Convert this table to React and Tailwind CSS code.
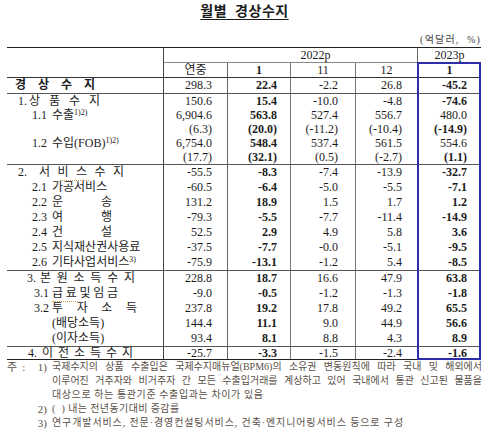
import React from 'react';

const COLS = 'grid grid-cols-[156px_64px_63px_65px_62px_64px]';
const PADS = ['pr-[15px]', 'pr-[13px]', 'pr-[17px]', 'pr-[15px]', 'pr-[14px]'];
const LINES = ['border-[#444]', 'border-[#666]', 'border-[#777]', 'border-[#777]', 'border-[#777]'];

// spaced-out label like "경 상 수 지"
function Spread({ text, w }) {
    return (
        <span className={`flex justify-between ${w}`}>
            {text.split('').map((c, i) => <span key={i}>{c}</span>)}
        </span>
    );
}

const groups = [
    {
        h: 'h-[15px] leading-[15px]',
        rows: [
            { label: <span className="pl-[8px] font-bold"><Spread text="경상수지" w="w-[80px]" /></span>, v: ['298.3', '22.4', '-2.2', '26.8', '-45.2'] },
        ],
    },
    {
        h: 'h-[14px] leading-[14px]',
        rows: [
            { num: '1.', pl: 'pl-[11px]', nw: 'w-[11px]', label: <Spread text="상품수지" w="w-[71px]" />, v: ['150.6', '15.4', '-10.0', '-4.8', '-74.6'] },
            { num: '1.1', pl: 'pl-[25px]', nw: 'w-[20px]', label: <span>수출<sup className="text-[8px]">1)2)</sup></span>, v: ['6,904.6', '563.8', '527.4', '556.7', '480.0'], light: true },
            { v: ['(6.3)', '(20.0)', '(-11.2)', '(-10.4)', '(-14.9)'] },
            { num: '1.2', pl: 'pl-[25px]', nw: 'w-[20px]', label: <span>수입(FOB)<sup className="text-[8px]">1)2)</sup></span>, v: ['6,754.0', '548.4', '537.4', '561.5', '554.6'], light: true },
            { v: ['(17.7)', '(32.1)', '(0.5)', '(-2.7)', '(1.1)'] },
        ],
    },
    {
        h: 'h-[15px] leading-[15px]',
        rows: [
            {
                num: '2.', pl: 'pl-[11px]', nw: 'w-[21px]',
                label: (
                    <span className="relative">
                        <Spread text="서비스수지" w="w-[85px]" />
                        <span className="absolute left-[21px] bottom-[-1px] w-[29px] border-b border-dotted border-[#d4a24a]" />
                    </span>
                ),
                v: ['-55.5', '-8.3', '-7.4', '-13.9', '-32.7'],
            },
            { num: '2.1', pl: 'pl-[25px]', nw: 'w-[20px]', label: '가공서비스', v: ['-60.5', '-6.4', '-5.0', '-5.5', '-7.1'] },
            { num: '2.2', pl: 'pl-[25px]', nw: 'w-[20px]', label: <Spread text="운송" w="w-[60px]" />, v: ['131.2', '18.9', '1.5', '1.7', '1.2'] },
            { num: '2.3', pl: 'pl-[25px]', nw: 'w-[20px]', label: <Spread text="여행" w="w-[60px]" />, v: ['-79.3', '-5.5', '-7.7', '-11.4', '-14.9'] },
            { num: '2.4', pl: 'pl-[25px]', nw: 'w-[20px]', label: <Spread text="건설" w="w-[60px]" />, v: ['52.5', '2.9', '4.9', '5.8', '3.6'] },
            { num: '2.5', pl: 'pl-[25px]', nw: 'w-[20px]', label: '지식재산권사용료', v: ['-37.5', '-7.7', '-0.0', '-5.1', '-9.5'] },
            { num: '2.6', pl: 'pl-[25px]', nw: 'w-[20px]', label: <span>기타사업서비스<sup className="text-[8px]">3)</sup></span>, v: ['-75.9', '-13.1', '-1.2', '5.4', '-8.5'] },
        ],
    },
    {
        h: 'h-[15px] leading-[15px]',
        rows: [
            { num: '3.', pl: 'pl-[20px]', nw: 'w-[13px]', label: <Spread text="본원소득수지" w="w-[95px]" />, v: ['228.8', '18.7', '16.6', '47.9', '63.8'] },
            {
                num: '3.1', pl: 'pl-[27px]', nw: 'w-[18px]',
                label: (
                    <span className="relative">
                        <Spread text="급료및임금" w="w-[66px]" />
                        <span className="absolute left-0 bottom-[-1px] w-[26px] border-b border-dotted border-[#d4a24a]" />
                    </span>
                ),
                v: ['-9.0', '-0.5', '-1.2', '-1.3', '-1.8'],
            },
            { num: '3.2', pl: 'pl-[27px]', nw: 'w-[18px]', label: <Spread text="투자소득" w="w-[85px]" />, v: ['237.8', '19.2', '17.8', '49.2', '65.5'] },
            { pl: 'pl-[45px]', label: '(배당소득)', v: ['144.4', '11.1', '9.0', '44.9', '56.6'] },
            { pl: 'pl-[45px]', label: '(이자소득)', v: ['93.4', '8.1', '8.8', '4.3', '8.9'] },
        ],
    },
    {
        h: 'h-[12px] leading-[12px]',
        rows: [
            { num: '4.', pl: 'pl-[21px]', nw: 'w-[14px]', label: <Spread text="이전소득수지" w="w-[91px]" />, v: ['-25.7', '-3.3', '-1.5', '-2.4', '-1.6'] },
        ],
    },
];

function Row({ row, h }) {
    return (
        <div className={`${COLS} ${h}`}>
            <div className={`flex items-center ${row.pl || ''}`}>
                {row.num && <span className={`${row.nw} shrink-0`}>{row.num}</span>}
                {row.label}
            </div>
            {row.v.map((val, i) => {
                const bold = i === 1 || (i === 4 && !row.light);
                return (
                    <div key={i} className={`border-l ${LINES[i]} text-right ${PADS[i]} ${bold ? 'font-bold' : ''}`}>
                        {val}
                    </div>
                );
            })}
        </div>
    );
}

export default function App() {
    return (
        <div className="w-[500px] h-[439px] overflow-hidden bg-white text-[#1c1c1c] font-['Liberation_Serif','Noto_Sans_CJK_KR',serif] text-[12px]">
            <div className="flex justify-center pr-[11px] pt-[3px]">
                <h1 className="text-[14px] font-bold leading-[18px] underline underline-offset-[3px] decoration-1 tracking-[0.5px]">월별&nbsp;&nbsp;경상수지</h1>
            </div>

            <div className="ml-[7px] w-[474px]">
                <div className="mt-[12px] text-right text-[10px] leading-[14px] tracking-[1.2px] text-[#444]">(억달러,&nbsp; %)</div>

                <div className="relative border-t border-[#222]">
                    {/* header */}
                    <div className={`${COLS} grid-rows-[15px_14px] border-b border-[#333] leading-[14px]`}>
                        <div className="row-span-2" />
                        <div className="col-span-4 border-l border-b border-[#444] border-b-[#888] text-center pl-[50px]">2022p</div>
                        <div className="border-l border-b border-[#666] border-b-[#888] text-center">2023p</div>
                        <div className="border-l border-[#444] text-center">연중</div>
                        <div className="border-l border-[#666] text-center font-bold">1</div>
                        <div className="border-l border-[#777] text-center">11</div>
                        <div className="border-l border-[#777] text-center">12</div>
                        <div className="border-l border-[#777] text-center font-bold">1</div>
                    </div>

                    {groups.map((g, gi) => (
                        <div key={gi} className={`border-b ${gi === groups.length - 1 ? 'border-[#222]' : 'border-[#555]'}`}>
                            {g.rows.map((row, ri) => <Row key={ri} row={row} h={g.h} />)}
                        </div>
                    ))}

                    {/* highlight frame on the latest month */}
                    <div className="pointer-events-none absolute right-0 top-[14px] bottom-0 w-[64px] border-2 border-[#2e2eaa]" />
                </div>
            </div>

            <div className="ml-[7px] w-[475px] text-[10px] leading-[14px] text-[#5a5048]">
                <div className="flex">
                    <div className="w-[45px] shrink-0 flex text-[11px]">
                        <span>주</span>
                        <span className="ml-[5px]">:</span>
                        <span className="ml-auto pr-[5px]">1)</span>
                    </div>
                    <div className="flex-1 text-justify [text-align-last:justify]">국제수지의 상품 수출입은 국제수지매뉴얼(BPM6)의 소유권 변동원칙에 따라 국내 및 해외에서</div>
                </div>
                <div className="pl-[45px] text-justify [text-align-last:justify]">이루어진 거주자와 비거주자 간 모든 수출입거래를 계상하고 있어 국내에서 통관 신고된 물품을</div>
                <div className="pl-[45px] tracking-[0.6px]">대상으로 하는 통관기준 수출입과는 차이가 있음</div>
                <div className="flex">
                    <div className="w-[45px] shrink-0 text-right pr-[5px] text-[11px]">2)</div>
                    <div className="tracking-[0.4px]">(&nbsp;&nbsp;) 내는 전년동기대비 증감률</div>
                </div>
                <div className="flex">
                    <div className="w-[45px] shrink-0 text-right pr-[5px] text-[11px]">3)</div>
                    <div className="tracking-[0.9px]">연구개발서비스, 전문·경영컨설팅서비스, 건축·엔지니어링서비스 등으로 구성</div>
                </div>
            </div>
        </div>
    );
}
